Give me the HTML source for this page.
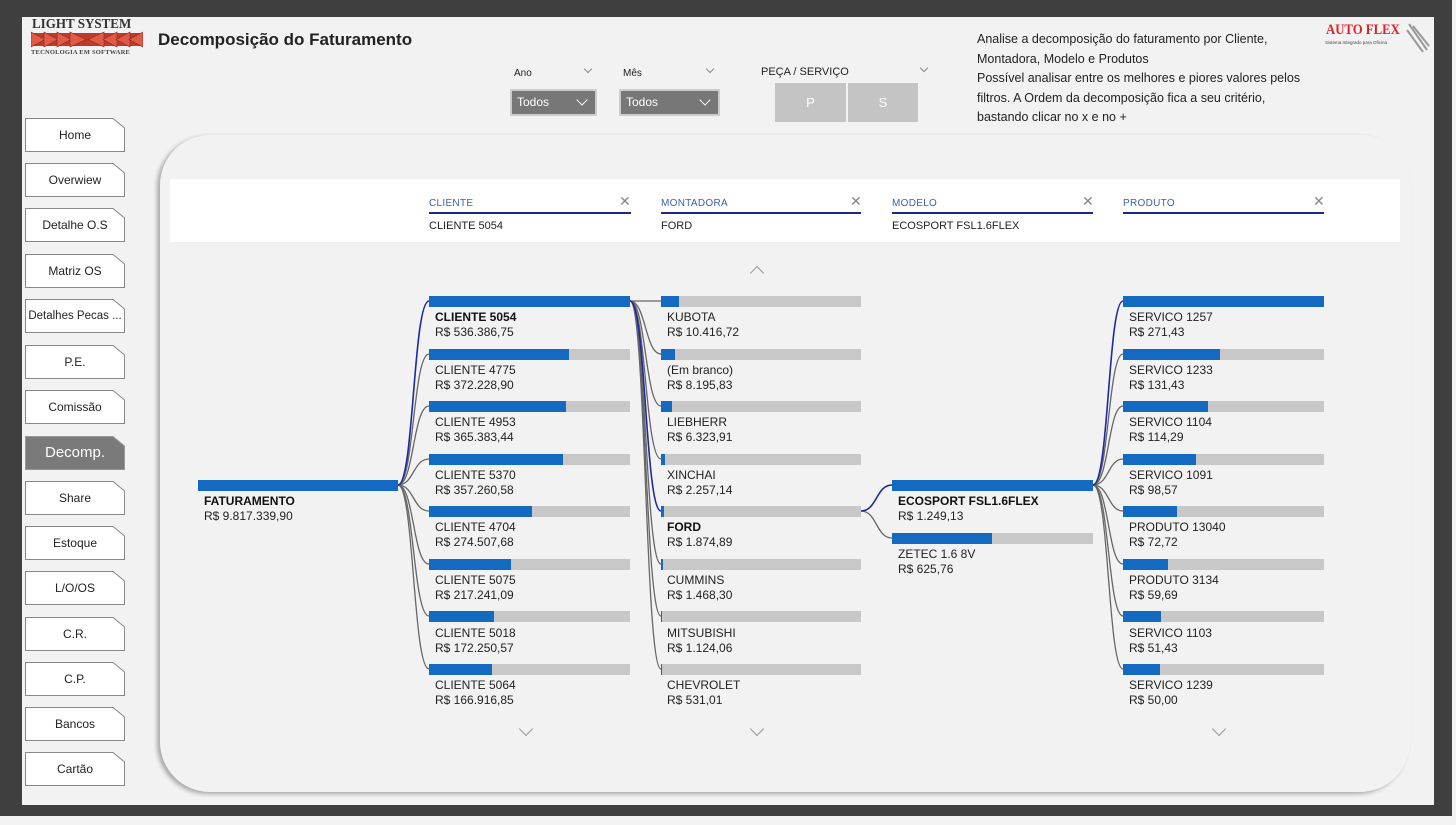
<!DOCTYPE html>
<html><head><meta charset="utf-8">
<style>
*{margin:0;padding:0;box-sizing:border-box}
body{width:1456px;height:825px;background:#f3f3f3;position:relative;overflow:hidden;font-family:"Liberation Sans",sans-serif;color:#222}
.frame{position:absolute;left:0;top:0;width:1452px;height:816px;background:#3f3f3f}
.canvas{position:absolute;left:22px;top:17px;width:1412px;height:788px;background:#f2f2f2}
.a{position:absolute}
.nav{position:absolute;left:25px;width:100px;height:34px;font-size:12px;text-align:center;line-height:34px}
.nav svg{position:absolute;left:0;top:0}
.nav span{position:relative}
.bar{position:absolute;height:11px;background:#c8c8c8}
.bar i{position:absolute;left:0;top:0;bottom:0;background:#1469c0}
.lb{position:absolute;font-size:12px;line-height:15px;color:#222}
.lb b{font-weight:bold;color:#111}
.hd{position:absolute;font-size:10px;color:#3a5fb0;letter-spacing:.3px}
.hl{position:absolute;height:2px;background:#1a2a8c}
.hv{position:absolute;font-size:11px;color:#222}
.x{position:absolute;font-size:14px;color:#888}
.chev{position:absolute;width:10px;height:10px;border-right:1.5px solid #999;border-bottom:1.5px solid #999}
</style></head><body>
<div class="frame"></div>
<div class="canvas"></div>

<div class="a" style="left:32px;top:17px;font-family:'Liberation Serif',serif;font-weight:bold;font-size:14px;color:#333;transform:scaleX(.93);transform-origin:left">LIGHT SYSTEM</div>
<svg class="a" style="left:31px;top:31px" width="112" height="17" viewBox="0 0 112 17">
<rect x="0" y="2" width="112" height="13" fill="#c0392b"/>
<g fill="#e05a45" stroke="#8a2a20" stroke-width=".6">
<polygon points="0,1 14,8.5 0,16"/><polygon points="13,1 27,8.5 13,16"/><polygon points="26,1 40,8.5 26,16"/><polygon points="39,1 55,8.5 39,16"/>
<polygon points="73,1 57,8.5 73,16"/><polygon points="86,1 72,8.5 86,16"/><polygon points="99,1 85,8.5 99,16"/><polygon points="112,1 98,8.5 112,16"/>
</g></svg>
<div class="a" style="left:31px;top:49px;font-family:'Liberation Serif',serif;font-size:6.5px;color:#444;letter-spacing:.2px;font-weight:bold">TECNOLOGIA EM SOFTWARE</div>
<div class="a" style="left:158px;top:30px;font-size:17px;font-weight:bold;color:#222">Decomposição do Faturamento</div>

<div class="a" style="left:514px;top:68px;font-size:10px">Ano</div>
<div class="chev" style="left:585px;top:66px;width:6px;height:6px;transform:rotate(45deg);border-color:#888;border-width:1px"></div>
<div class="a" style="left:510px;top:89px;width:87px;height:27px;background:#777;border:2px solid #ccc;color:#fff;font-size:12px;line-height:23px;padding-left:5px">Todos</div>
<div class="chev" style="left:578px;top:96px;width:8px;height:8px;transform:rotate(45deg);border-color:#fff"></div>
<div class="a" style="left:623px;top:68px;font-size:10px">Mês</div>
<div class="chev" style="left:707px;top:66px;width:6px;height:6px;transform:rotate(45deg);border-color:#888;border-width:1px"></div>
<div class="a" style="left:619px;top:89px;width:101px;height:27px;background:#777;border:2px solid #ccc;color:#fff;font-size:12px;line-height:23px;padding-left:5px">Todos</div>
<div class="chev" style="left:701px;top:96px;width:8px;height:8px;transform:rotate(45deg);border-color:#fff"></div>
<div class="a" style="left:761px;top:66px;font-size:11px">PEÇA / SERVIÇO</div>
<div class="chev" style="left:921px;top:65px;width:6px;height:6px;transform:rotate(45deg);border-color:#888;border-width:1px"></div>
<div class="a" style="left:775px;top:83px;width:71px;height:39px;background:#c4c4c4;color:#fff;font-size:13px;text-align:center;line-height:39px">P</div>
<div class="a" style="left:848px;top:83px;width:70px;height:39px;background:#c4c4c4;color:#fff;font-size:13px;text-align:center;line-height:39px">S</div>

<div class="a" style="left:977px;top:30px;font-size:12.5px;line-height:19.5px;color:#222;width:340px">Analise a decomposição do faturamento por Cliente, Montadora, Modelo e Produtos<br>Possível analisar entre os melhores e piores valores pelos filtros. A Ordem da decomposição fica a seu critério, bastando clicar no x e no +</div>
<div class="a" style="left:1326px;top:22px;font-family:'Liberation Serif',serif;font-weight:bold;font-size:15px;color:#e0202a;transform:scaleX(.85);transform-origin:left">AUTO FLEX</div>
<div class="a" style="left:1325px;top:40px;font-size:4.5px;color:#444">Sistema Integrado para Oficina</div>
<svg class="a" style="left:1405px;top:22px" width="26" height="32"><g stroke="#999" stroke-width="2"><line x1="4" y1="2" x2="22" y2="28"/><line x1="2" y1="8" x2="18" y2="30"/><line x1="8" y1="4" x2="24" y2="24"/></g></svg>

<!-- nav -->
<div id="navs"></div>
<div class="nav" style="top:118px"><svg width="100" height="34"><path d="M0.5 0.5H88L99.5 10V33.5H0.5Z" fill="#fff" stroke="#888"/></svg><span>Home</span></div>
<div class="nav" style="top:163px"><svg width="100" height="34"><path d="M0.5 0.5H88L99.5 10V33.5H0.5Z" fill="#fff" stroke="#888"/></svg><span>Overwiew</span></div>
<div class="nav" style="top:208px"><svg width="100" height="34"><path d="M0.5 0.5H88L99.5 10V33.5H0.5Z" fill="#fff" stroke="#888"/></svg><span>Detalhe O.S</span></div>
<div class="nav" style="top:254px"><svg width="100" height="34"><path d="M0.5 0.5H88L99.5 10V33.5H0.5Z" fill="#fff" stroke="#888"/></svg><span>Matriz OS</span></div>
<div class="nav" style="top:299px;font-size:11.5px"><svg width="100" height="34"><path d="M0.5 0.5H88L99.5 10V33.5H0.5Z" fill="#fff" stroke="#888"/></svg><span>Detalhes Pecas ...</span></div>
<div class="nav" style="top:345px"><svg width="100" height="34"><path d="M0.5 0.5H88L99.5 10V33.5H0.5Z" fill="#fff" stroke="#888"/></svg><span>P.E.</span></div>
<div class="nav" style="top:390px"><svg width="100" height="34"><path d="M0.5 0.5H88L99.5 10V33.5H0.5Z" fill="#fff" stroke="#888"/></svg><span>Comissão</span></div>
<div class="nav" style="top:436px;color:#fff;font-size:15px"><svg width="100" height="34"><path d="M0.5 0.5H88L99.5 10V33.5H0.5Z" fill="#7a7a7a" stroke="#999"/></svg><span>Decomp.</span></div>
<div class="nav" style="top:481px"><svg width="100" height="34"><path d="M0.5 0.5H88L99.5 10V33.5H0.5Z" fill="#fff" stroke="#888"/></svg><span>Share</span></div>
<div class="nav" style="top:526px"><svg width="100" height="34"><path d="M0.5 0.5H88L99.5 10V33.5H0.5Z" fill="#fff" stroke="#888"/></svg><span>Estoque</span></div>
<div class="nav" style="top:571px"><svg width="100" height="34"><path d="M0.5 0.5H88L99.5 10V33.5H0.5Z" fill="#fff" stroke="#888"/></svg><span>L/O/OS</span></div>
<div class="nav" style="top:617px"><svg width="100" height="34"><path d="M0.5 0.5H88L99.5 10V33.5H0.5Z" fill="#fff" stroke="#888"/></svg><span>C.R.</span></div>
<div class="nav" style="top:662px"><svg width="100" height="34"><path d="M0.5 0.5H88L99.5 10V33.5H0.5Z" fill="#fff" stroke="#888"/></svg><span>C.P.</span></div>
<div class="nav" style="top:707px"><svg width="100" height="34"><path d="M0.5 0.5H88L99.5 10V33.5H0.5Z" fill="#fff" stroke="#888"/></svg><span>Bancos</span></div>
<div class="nav" style="top:752px"><svg width="100" height="34"><path d="M0.5 0.5H88L99.5 10V33.5H0.5Z" fill="#fff" stroke="#888"/></svg><span>Cartão</span></div>

<div class="a" style="left:160px;top:135px;width:1250px;height:657px;background:#f2f2f2;border-radius:50px;box-shadow:-3px 2px 4px rgba(0,0,0,.3)"></div>
<div class="a" style="left:170px;top:179px;width:1230px;height:63px;background:#fff"></div>

<div class="hd" style="left:429px;top:198px">CLIENTE</div><div class="x" style="left:619px;top:193px">✕</div><div class="hl" style="left:429px;top:212px;width:202px"></div><div class="hv" style="left:429px;top:220px">CLIENTE 5054</div>
<div class="hd" style="left:661px;top:198px">MONTADORA</div><div class="x" style="left:850px;top:193px">✕</div><div class="hl" style="left:661px;top:212px;width:200px"></div><div class="hv" style="left:661px;top:220px">FORD</div>
<div class="hd" style="left:892px;top:198px">MODELO</div><div class="x" style="left:1082px;top:193px">✕</div><div class="hl" style="left:892px;top:212px;width:201px"></div><div class="hv" style="left:892px;top:220px">ECOSPORT FSL1.6FLEX</div>
<div class="hd" style="left:1123px;top:198px">PRODUTO</div><div class="x" style="left:1313px;top:193px">✕</div><div class="hl" style="left:1123px;top:212px;width:201px"></div>

<div class="chev" style="left:752px;top:268px;transform:rotate(-135deg)"></div>
<div class="chev" style="left:521px;top:724px;transform:rotate(45deg)"></div>
<div class="chev" style="left:752px;top:724px;transform:rotate(45deg)"></div>
<div class="chev" style="left:1214px;top:724px;transform:rotate(45deg)"></div>

<svg class="a" style="left:0;top:0" width="1456" height="825" fill="none" stroke-width="1.3">
<g stroke="#666">
<path d="M398 485 C414 485,413 354,429 354"/><path d="M398 485 C414 485,413 406,429 406"/><path d="M398 485 C414 485,413 459,429 459"/><path d="M398 485 C414 485,413 511,429 511"/><path d="M398 485 C414 485,413 564,429 564"/><path d="M398 485 C414 485,413 616,429 616"/><path d="M398 485 C414 485,413 669,429 669"/>
<path d="M630 301 L661 301"/><path d="M630 301 C646 301,645 354,661 354"/><path d="M630 301 C646 301,645 406,661 406"/><path d="M630 301 C646 301,645 459,661 459"/><path d="M630 301 C646 301,645 564,661 564"/><path d="M630 301 C646 301,645 616,661 616"/><path d="M630 301 C646 301,645 669,661 669"/>
<path d="M861 511 C877 511,876 538,892 538"/>
<path d="M1093 485 C1109 485,1108 354,1123 354"/><path d="M1093 485 C1109 485,1108 406,1123 406"/><path d="M1093 485 C1109 485,1108 459,1123 459"/><path d="M1093 485 C1109 485,1108 511,1123 511"/><path d="M1093 485 C1109 485,1108 564,1123 564"/><path d="M1093 485 C1109 485,1108 616,1123 616"/><path d="M1093 485 C1109 485,1108 669,1123 669"/>
</g>
<g stroke="#1a2aa0" stroke-width="1.6">
<path d="M398 485 C414 485,413 301,429 301"/><path d="M630 301 C646 301,645 511,661 511"/><path d="M861 511 C877 511,876 485,892 485"/><path d="M1093 485 C1109 485,1108 301,1123 301"/>
</g></svg>

<div class="bar" style="left:198px;top:480px;width:200px"><i style="width:100%"></i></div>
<div class="lb" style="left:204px;top:494px"><b>FATURAMENTO</b><br>R$ 9.817.339,90</div>

<div class="bar" style="left:429px;top:296px;width:201px"><i style="width:100%"></i></div><div class="lb" style="left:435px;top:310px"><b>CLIENTE 5054</b><br>R$ 536.386,75</div>
<div class="bar" style="left:429px;top:349px;width:201px"><i style="width:140px"></i></div><div class="lb" style="left:435px;top:363px">CLIENTE 4775<br>R$ 372.228,90</div>
<div class="bar" style="left:429px;top:401px;width:201px"><i style="width:137px"></i></div><div class="lb" style="left:435px;top:415px">CLIENTE 4953<br>R$ 365.383,44</div>
<div class="bar" style="left:429px;top:454px;width:201px"><i style="width:134px"></i></div><div class="lb" style="left:435px;top:468px">CLIENTE 5370<br>R$ 357.260,58</div>
<div class="bar" style="left:429px;top:506px;width:201px"><i style="width:103px"></i></div><div class="lb" style="left:435px;top:520px">CLIENTE 4704<br>R$ 274.507,68</div>
<div class="bar" style="left:429px;top:559px;width:201px"><i style="width:82px"></i></div><div class="lb" style="left:435px;top:573px">CLIENTE 5075<br>R$ 217.241,09</div>
<div class="bar" style="left:429px;top:611px;width:201px"><i style="width:65px"></i></div><div class="lb" style="left:435px;top:626px">CLIENTE 5018<br>R$ 172.250,57</div>
<div class="bar" style="left:429px;top:664px;width:201px"><i style="width:63px"></i></div><div class="lb" style="left:435px;top:678px">CLIENTE 5064<br>R$ 166.916,85</div>

<div class="bar" style="left:661px;top:296px;width:200px"><i style="width:18px"></i></div><div class="lb" style="left:667px;top:310px">KUBOTA<br>R$ 10.416,72</div>
<div class="bar" style="left:661px;top:349px;width:200px"><i style="width:14px"></i></div><div class="lb" style="left:667px;top:363px">(Em branco)<br>R$ 8.195,83</div>
<div class="bar" style="left:661px;top:401px;width:200px"><i style="width:11px"></i></div><div class="lb" style="left:667px;top:415px">LIEBHERR<br>R$ 6.323,91</div>
<div class="bar" style="left:661px;top:454px;width:200px"><i style="width:4px"></i></div><div class="lb" style="left:667px;top:468px">XINCHAI<br>R$ 2.257,14</div>
<div class="bar" style="left:661px;top:506px;width:200px"><i style="width:3px"></i></div><div class="lb" style="left:667px;top:520px"><b>FORD</b><br>R$ 1.874,89</div>
<div class="bar" style="left:661px;top:559px;width:200px"><i style="width:2px"></i></div><div class="lb" style="left:667px;top:573px">CUMMINS<br>R$ 1.468,30</div>
<div class="bar" style="left:661px;top:611px;width:200px"><i style="width:1px"></i></div><div class="lb" style="left:667px;top:626px">MITSUBISHI<br>R$ 1.124,06</div>
<div class="bar" style="left:661px;top:664px;width:200px"><i style="width:1px"></i></div><div class="lb" style="left:667px;top:678px">CHEVROLET<br>R$ 531,01</div>

<div class="bar" style="left:892px;top:480px;width:201px"><i style="width:100%"></i></div><div class="lb" style="left:898px;top:494px"><b>ECOSPORT FSL1.6FLEX</b><br>R$ 1.249,13</div>
<div class="bar" style="left:892px;top:533px;width:201px"><i style="width:100px"></i></div><div class="lb" style="left:898px;top:547px">ZETEC 1.6 8V<br>R$ 625,76</div>

<div class="bar" style="left:1123px;top:296px;width:201px"><i style="width:100%"></i></div><div class="lb" style="left:1129px;top:310px">SERVICO 1257<br>R$ 271,43</div>
<div class="bar" style="left:1123px;top:349px;width:201px"><i style="width:97px"></i></div><div class="lb" style="left:1129px;top:363px">SERVICO 1233<br>R$ 131,43</div>
<div class="bar" style="left:1123px;top:401px;width:201px"><i style="width:85px"></i></div><div class="lb" style="left:1129px;top:415px">SERVICO 1104<br>R$ 114,29</div>
<div class="bar" style="left:1123px;top:454px;width:201px"><i style="width:73px"></i></div><div class="lb" style="left:1129px;top:468px">SERVICO 1091<br>R$ 98,57</div>
<div class="bar" style="left:1123px;top:506px;width:201px"><i style="width:54px"></i></div><div class="lb" style="left:1129px;top:520px">PRODUTO 13040<br>R$ 72,72</div>
<div class="bar" style="left:1123px;top:559px;width:201px"><i style="width:45px"></i></div><div class="lb" style="left:1129px;top:573px">PRODUTO 3134<br>R$ 59,69</div>
<div class="bar" style="left:1123px;top:611px;width:201px"><i style="width:38px"></i></div><div class="lb" style="left:1129px;top:626px">SERVICO 1103<br>R$ 51,43</div>
<div class="bar" style="left:1123px;top:664px;width:201px"><i style="width:37px"></i></div><div class="lb" style="left:1129px;top:678px">SERVICO 1239<br>R$ 50,00</div>
</body></html>
